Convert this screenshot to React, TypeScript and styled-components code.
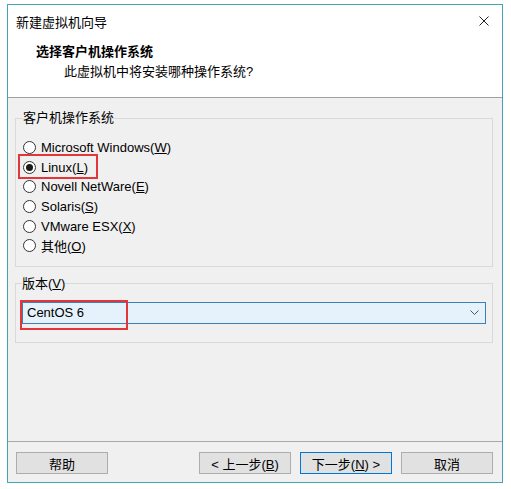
import { createGlobalStyle, styled } from "styled-components";

const GlobalStyle = createGlobalStyle`
  html, body {
    margin: 0;
    padding: 0;
    background: #ffffff;
  }
  body {
    font-family: "Liberation Sans", "Noto Sans CJK SC", sans-serif;
    font-size: 13px;
    color: #000;
  }
`;

const Window = styled.div`
  box-sizing: border-box;
  margin: 4px 0 0 7px;
  width: 496px;
  height: 479px;
  border: 1px solid #3fa7b6;
  display: flex;
  flex-direction: column;
  background: #f0f0f0;
`;

const TitleBar = styled.div`
  height: 32px;
  display: flex;
  align-items: center;
  justify-content: space-between;
  padding: 0 13px 0 8px;
  background: #fff;
`;

const Header = styled.div`
  box-sizing: border-box;
  height: 61px;
  padding: 5px 0 0 28px;
  background: #fff;
  border-bottom: 1px solid #a0a0a0;
`;

const Heading = styled.div`
  font-weight: bold;
  line-height: 20px;
`;

const Subtitle = styled.div`
  line-height: 20px;
  padding-left: 28px;
`;

const Body = styled.div`
  flex: 1;
  padding: 10px 9px 0 7px;
  display: flex;
  flex-direction: column;
  gap: 7px;
`;

const Group = styled.fieldset<{ $pad: string }>`
  margin: 0;
  border: 1px solid #d9d9d9;
  padding: ${(p) => p.$pad};
`;

const Legend = styled.legend`
  padding: 0;
  line-height: 20px;
`;

const RadioRow = styled.div`
  position: relative;
  height: 19.6px;
  display: flex;
  align-items: center;
  gap: 5px;
`;

const Radio = styled.span<{ $checked?: boolean }>`
  box-sizing: border-box;
  width: 13px;
  height: 13px;
  border-radius: 50%;
  border: 1px solid #333;
  background: #fff;
  display: flex;
  align-items: center;
  justify-content: center;
  &::after {
    content: "";
    display: ${(p) => (p.$checked ? "block" : "none")};
    width: 7px;
    height: 7px;
    border-radius: 50%;
    background: #1a1a1a;
  }
`;

const Mark = styled.span<{ $l: number; $t: number; $w: number; $h: number }>`
  position: absolute;
  left: ${(p) => p.$l}px;
  top: ${(p) => p.$t}px;
  width: ${(p) => p.$w}px;
  height: ${(p) => p.$h}px;
  box-sizing: border-box;
  border: 2px solid #e2363b;
  pointer-events: none;
`;

const Select = styled.div`
  position: relative;
  box-sizing: border-box;
  height: 22px;
  border: 1px solid #3d7fb6;
  background: #e5f1fb;
  display: flex;
  align-items: center;
  justify-content: space-between;
  padding: 0 6px 0 4px;
`;

const Footer = styled.div`
  box-sizing: border-box;
  height: 41px;
  border-top: 1px solid #a9a9a9;
  padding: 10px 9px 8px 8px;
  display: flex;
  justify-content: space-between;
`;

const ButtonGroup = styled.div`
  display: flex;
  gap: 9px;
`;

const Button = styled.button<{ $default?: boolean }>`
  box-sizing: border-box;
  width: 92px;
  height: 22px;
  margin: 0;
  padding: 0;
  font: inherit;
  color: #000;
  background: #e1e1e1;
  border: 1px solid ${(p) => (p.$default ? "#0078d7" : "#adadad")};
`;

const Key = styled.span`
  text-decoration: underline;
`;

const options: { label: string; key: string; checked?: boolean }[] = [
  { label: "Microsoft Windows", key: "W" },
  { label: "Linux", key: "L", checked: true },
  { label: "Novell NetWare", key: "E" },
  { label: "Solaris", key: "S" },
  { label: "VMware ESX", key: "X" },
  { label: "其他", key: "O" },
];

export default function App() {
  return (
    <>
      <GlobalStyle />
      <Window>
        <TitleBar>
          <span>新建虚拟机向导</span>
          <svg width="10" height="10" viewBox="0 0 10 10">
            <path d="M0.5 0.5 L9.5 9.5 M9.5 0.5 L0.5 9.5" stroke="#222" strokeWidth="1" />
          </svg>
        </TitleBar>
        <Header>
          <Heading>选择客户机操作系统</Heading>
          <Subtitle>此虚拟机中将安装哪种操作系统?</Subtitle>
        </Header>
        <Body>
          <Group $pad="10px 7px 10px 7px">
            <Legend>客户机操作系统</Legend>
            {options.map((o) => (
              <RadioRow key={o.key}>
                <Radio $checked={o.checked} />
                <span>
                  {o.label}(<Key>{o.key}</Key>)
                </span>
                {o.checked && <Mark $l={-5} $t={-4} $w={80} $h={25} />}
              </RadioRow>
            ))}
          </Group>
          <Group $pad="8px 6px 18px 6px">
            <Legend>
              版本(<Key>V</Key>)
            </Legend>
            <Select>
              <span>CentOS 6</span>
              <svg width="9" height="5" viewBox="0 0 9 5">
                <path d="M0.5 0.5 L4.5 4.5 L8.5 0.5" fill="none" stroke="#555" strokeWidth="1" />
              </svg>
              <Mark $l={-3} $t={-3} $w={108} $h={30} />
            </Select>
          </Group>
        </Body>
        <Footer>
          <Button>帮助</Button>
          <ButtonGroup>
            <Button>
              &lt; 上一步(<Key>B</Key>)
            </Button>
            <Button $default>
              下一步(<Key>N</Key>) &gt;
            </Button>
            <Button>取消</Button>
          </ButtonGroup>
        </Footer>
      </Window>
    </>
  );
}
